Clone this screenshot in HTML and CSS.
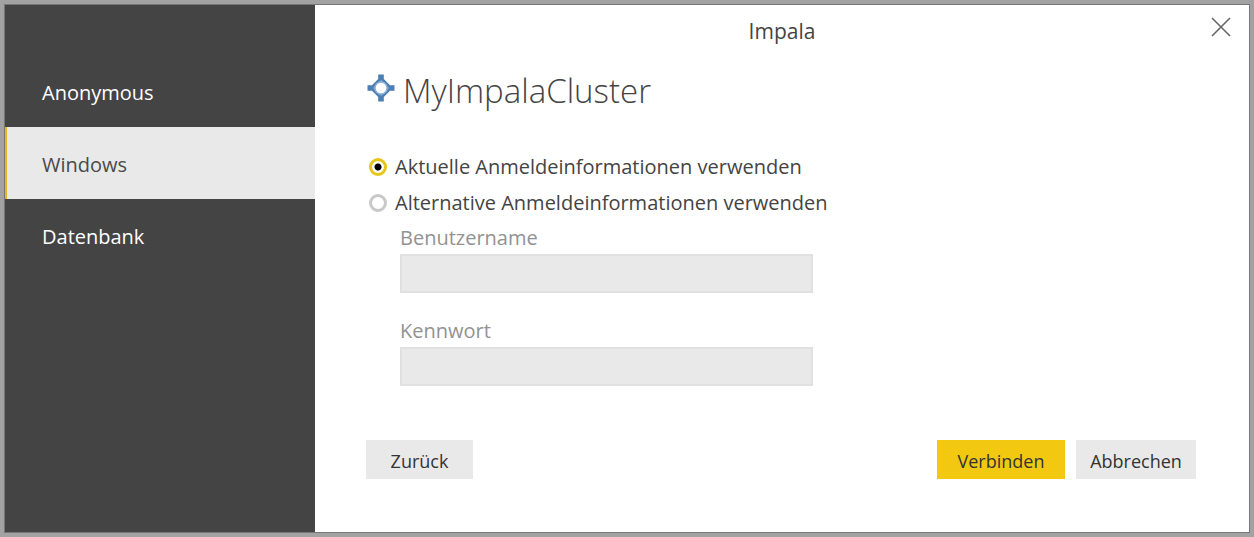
FILE: index.html
```html
<!DOCTYPE html>
<html lang="de">
<head>
<meta charset="utf-8">
<meta name="viewport" content="width=device-width, initial-scale=1">
<title>Impala</title>
<link rel="stylesheet" href="styles.css">
</head>
<body>
<div class="dialog" role="dialog" aria-labelledby="dialog-title">
  <nav class="sidebar">
    <a class="tab" href="#anonymous">Anonymous</a>
    <a class="tab tab-active" href="#windows" aria-current="page">Windows</a>
    <a class="tab" href="#datenbank">Datenbank</a>
  </nav>
  <main class="main">
    <header class="titlebar">
      <h1 class="title" id="dialog-title">Impala</h1>
      <button class="close" type="button" aria-label="Schließen">
        <svg width="20" height="20" viewBox="0 0 20 20" aria-hidden="true"><path d="M1 1L19 19M19 1L1 19" fill="none" stroke="#666" stroke-width="1.6"/></svg>
      </button>
    </header>
    <form class="form">
      <h2 class="source">
        <svg class="source-icon" width="28" height="28" viewBox="0 0 28 28" aria-hidden="true">
          <path d="M11.200 .5h5.600v4.500L23 11.200h4.500v5.600H23L16.800 23v4.500h-5.600V23L5 16.800H.5v-5.600H5L11.200 5z" fill="#4b7eb3"/>
          <path d="M14 5.500L22.500 14 14 22.500 5.500 14z" fill="#6d99c8"/>
          <circle cx="14" cy="14" r="6" fill="#fff" stroke="#8fb3da" stroke-width="1.400"/>
        </svg>
        MyImpalaCluster
      </h2>
      <label class="option"><input class="radio" type="radio" name="cred" checked>Aktuelle Anmeldeinformationen verwenden</label>
      <label class="option"><input class="radio" type="radio" name="cred">Alternative Anmeldeinformationen verwenden</label>
      <div class="fields">
        <div class="field">
          <label class="field-label" for="user">Benutzername</label>
          <input class="field-input" id="user" type="text" disabled>
        </div>
        <div class="field">
          <label class="field-label" for="password">Kennwort</label>
          <input class="field-input" id="password" type="password" disabled>
        </div>
      </div>
      <footer class="actions">
        <button class="button button-back" type="button">Zurück</button>
        <button class="button button-primary" type="submit">Verbinden</button>
        <button class="button button-cancel" type="button">Abbrechen</button>
      </footer>
    </form>
  </main>
</div>
</body>
</html>
```
FILE: styles.css
```css
* {
  box-sizing: border-box;
}

body {
  margin: 0;
  padding: 4px;
  min-height: 100vh;
  display: flex;
  background: #a3a2a2;
  color: #444;
  font-family: "Open Sans", "Noto Sans", sans-serif;
  font-size: 20px;
}

.dialog {
  flex: 1;
  display: flex;
  border: 1px solid #777;
  background: #fff;
}

.sidebar {
  flex: 0 0 310px;
  padding-top: 50px;
  background: #444;
}

.tab {
  display: flex;
  align-items: center;
  height: 72px;
  padding: 2px 0 0 37px;
  color: #fff;
  text-decoration: none;
}

.tab-active {
  padding-left: 35px;
  border-left: 2px solid #e0b91c;
  background: #e9e9e9;
  color: #4a4a4a;
}

.main {
  flex: 1;
  display: flex;
  flex-direction: column;
}

.titlebar {
  display: grid;
  grid-template-columns: 1fr auto 1fr;
  align-items: start;
  padding-top: 12px;
  height: 62px;
}

.title {
  grid-column: 2;
  margin: 0;
  font-size: 21px;
  font-weight: 400;
  line-height: 28px;
}

.close {
  justify-self: end;
  display: flex;
  margin-right: 18px;
  padding: 0;
  border: 0;
  background: none;
}

.form {
  flex: 1;
  display: flex;
  flex-direction: column;
  padding: 0 53px 53px 51px;
}

.source {
  display: flex;
  gap: 8px;
  margin: 0 0 34px 1px;
  font-size: 33px;
  font-weight: 300;
  line-height: 48px;
}

.source-icon {
  margin-top: 7px;
}

.option {
  display: flex;
  align-items: center;
  align-self: flex-start;
  gap: 8px;
  height: 36px;
  padding: 0 0 1px 3px;
}

.radio {
  appearance: none;
  width: 18px;
  height: 18px;
  margin: 0;
  border: 3px solid #c8c8c8;
  border-radius: 50%;
  background: #fff;
}

.radio:checked {
  border-color: #e6c619;
  background: radial-gradient(circle, #000 3px, #fff 4px);
}

.fields {
  display: flex;
  flex-direction: column;
  gap: 21px;
  width: 100%;
  max-width: 447px;
  padding-left: 34px;
}

.field {
  display: flex;
  flex-direction: column;
}

.field-label {
  color: #929292;
  line-height: 33px;
}

.field-input {
  width: 100%;
  height: 39px;
  padding: 0 8px;
  border: 2px solid #e0e0e0;
  background: #e9e9e9;
  font: inherit;
}

.actions {
  display: flex;
  gap: 11px;
  margin-top: auto;
}

.button {
  height: 39px;
  padding: 2px 0 0;
  border: 0;
  background: #e9e9e9;
  color: #333;
  font: inherit;
  font-size: 18px;
}

.button-back {
  width: 107px;
  margin-right: auto;
}

.button-primary {
  width: 128px;
  background: #f2c811;
}

.button-cancel {
  width: 120px;
}
```
